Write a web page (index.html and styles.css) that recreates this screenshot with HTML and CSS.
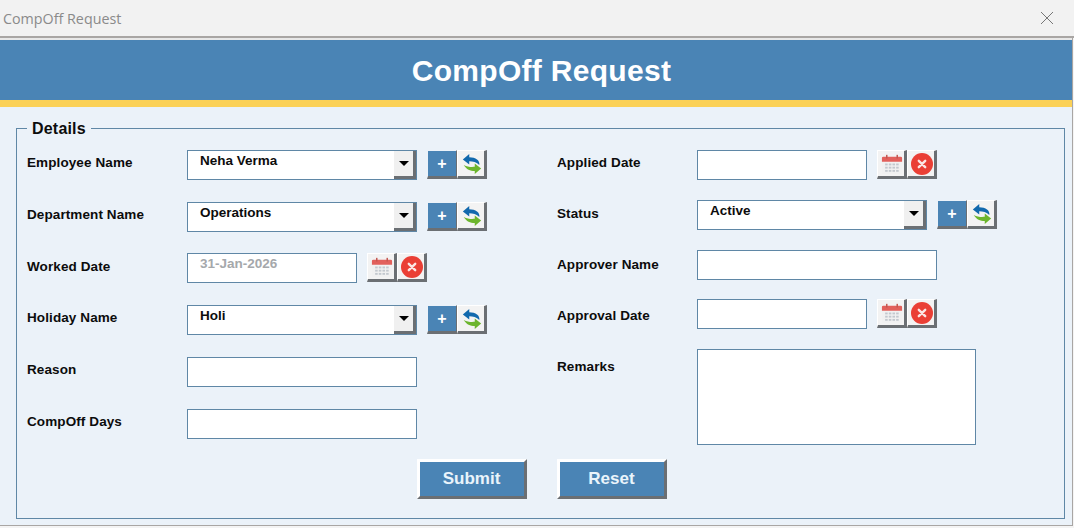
FILE: index.html
```html
<!DOCTYPE html>
<html lang="en">
<head>
    <meta charset="UTF-8">
    <title>CompOff Request</title>
    <link rel="stylesheet" href="styles.css">
</head>
<body>
    <svg class="icon-defs" width="0" height="0">
        <defs>
            <symbol id="i-cal" viewBox="0 0 24 24">
                <rect x="1" y="5" width="22" height="18" rx="1" fill="#f1f1f1"/>
                <path d="M1 5.500a1.500 1.500 0 0 1 1.500-1.500h19a1.500 1.500 0 0 1 1.500 1.500v4h-22z" fill="#e2605b"/>
                <rect x="5.500" y="2" width="1.600" height="4" fill="#c2564f"/>
                <rect x="16.900" y="2" width="1.600" height="4" fill="#c2564f"/>
                <g fill="#c3c8ce">
                    <rect x="4.500" y="11.500" width="2.800" height="2"/><rect x="8.500" y="11.500" width="2.800" height="2"/><rect x="12.500" y="11.500" width="2.800" height="2"/><rect x="16.500" y="11.500" width="2.800" height="2"/>
                    <rect x="4.500" y="15" width="2.800" height="2"/><rect x="8.500" y="15" width="2.800" height="2"/><rect x="12.500" y="15" width="2.800" height="2"/><rect x="16.500" y="15" width="2.800" height="2"/>
                    <rect x="4.500" y="18.500" width="2.800" height="2"/><rect x="8.500" y="18.500" width="2.800" height="2"/><rect x="12.500" y="18.500" width="2.800" height="2"/><rect x="16.500" y="18.500" width="2.800" height="2"/>
                </g>
            </symbol>
            <symbol id="i-clear" viewBox="0 0 24 24">
                <circle cx="12" cy="12" r="12" fill="#ea3f35"/>
                <path d="M8.500 8.500l7 7M15.500 8.500l-7 7" stroke="#fbe6e4" stroke-width="2.600" stroke-linecap="round"/>
            </symbol>
            <symbol id="i-refresh" viewBox="0 0 24 24">
                <path d="M9 1L2 7l7 5.500V9c4 0 8 1 11 4 1-5-4-8.500-11-8.500z" fill="#1269ad"/>
                <path d="M15 11.500l7 5.500-7 6v-3.500c-5 0-9-1.500-12-6.500 4 2 8 2.500 12 2z" fill="#6cb52d"/>
            </symbol>
        </defs>
    </svg>

    <div class="titlebar">
        <span class="titlebar-text">CompOff Request</span>
        <svg class="close-x" width="14" height="14" viewBox="0 0 14 14"><path d="M1 1l12 12M13 1L1 13" stroke="#777" stroke-width="1"/></svg>
    </div>

    <div class="window">
        <header class="banner"><h1>CompOff Request</h1></header>

        <fieldset class="details">
            <legend>Details</legend>

            <div class="columns">
                <div class="col col-left">
                    <div class="row">
                        <label>Employee Name</label>
                        <div class="combo"><span>Neha Verma</span><i class="drop"></i></div>
                        <button class="tool tool-add">+</button><button class="tool"><svg><use href="#i-refresh"/></svg></button>
                    </div>
                    <div class="row">
                        <label>Department Name</label>
                        <div class="combo"><span>Operations</span><i class="drop"></i></div>
                        <button class="tool tool-add">+</button><button class="tool"><svg><use href="#i-refresh"/></svg></button>
                    </div>
                    <div class="row row-tight">
                        <label class="drop-1">Worked Date</label>
                        <div class="box box-date box-muted">31-Jan-2026</div>
                        <button class="tool"><svg><use href="#i-cal"/></svg></button><button class="tool"><svg><use href="#i-clear"/></svg></button>
                    </div>
                    <div class="row">
                        <label>Holiday Name</label>
                        <div class="combo"><span>Holi</span><i class="drop"></i></div>
                        <button class="tool tool-add">+</button><button class="tool"><svg><use href="#i-refresh"/></svg></button>
                    </div>
                    <div class="row">
                        <label>Reason</label>
                        <div class="box box-wide"></div>
                    </div>
                    <div class="row">
                        <label>CompOff Days</label>
                        <div class="box box-wide"></div>
                    </div>
                </div>

                <div class="col col-right">
                    <div class="row">
                        <label>Applied Date</label>
                        <div class="box box-date"></div>
                        <button class="tool"><svg><use href="#i-cal"/></svg></button><button class="tool"><svg><use href="#i-clear"/></svg></button>
                    </div>
                    <div class="row">
                        <label class="drop-1">Status</label>
                        <div class="combo"><span>Active</span><i class="drop"></i></div>
                        <button class="tool tool-add">+</button><button class="tool"><svg><use href="#i-refresh"/></svg></button>
                    </div>
                    <div class="row">
                        <label class="drop-2">Approver Name</label>
                        <div class="box box-approver"></div>
                    </div>
                    <div class="row row-tight">
                        <label class="drop-4">Approval Date</label>
                        <div class="box box-date"></div>
                        <button class="tool"><svg><use href="#i-cal"/></svg></button><button class="tool"><svg><use href="#i-clear"/></svg></button>
                    </div>
                    <div class="row row-top">
                        <label class="drop-5">Remarks</label>
                        <div class="box box-remarks"></div>
                    </div>
                </div>
            </div>

            <div class="actions">
                <button class="action">Submit</button>
                <button class="action">Reset</button>
            </div>
        </fieldset>
    </div>
</body>
</html>
```

FILE: styles.css
```css
:root {
    --steel: #4a84b5;
    --yellow: #fbd157;
    --panel: #ebf2f9;
    --line: #5f87a6;
    --shade: #6b6f73;
}

* {
    box-sizing: border-box;
}

html, body {
    height: 100%;
}

body {
    margin: 0;
    background-color: #f4f4f4;
    color: #0c0c0c;
    font-family: "Liberation Sans", Arial, sans-serif;
    overflow: hidden;
}

.icon-defs {
    position: absolute;
}

.titlebar {
    height: 38px;
    padding: 0 20px 0 3px;
    display: flex;
    align-items: center;
    justify-content: space-between;
    background-color: #f2f2f2;
    border-bottom: 2px solid #a9a6a4;
}

.titlebar-text {
    font-family: "Open Sans", sans-serif;
    font-size: 14.300px;
    color: #8a8a8a;
}

.window {
    margin-right: 2px;
    height: 488px;
    border-top: 2px solid #e8e8e8;
    border-bottom: 1px solid #a9a6a4;
    background-color: var(--panel);
    box-shadow: 1px 0 0 #a9a6a4;
}

.banner {
    height: 67px;
    padding: 1px 0 0 11px;
    display: flex;
    align-items: center;
    justify-content: center;
    background-color: var(--steel);
    border-bottom: 7px solid var(--yellow);
}

.banner h1 {
    margin: 0;
    font-size: 30px;
    letter-spacing: 0.3px;
    color: #fff;
}

.details {
    margin: 11px 7px 0 16px;
    padding: 12px 0 0 10px;
    height: 401px;
    border: 1px solid var(--line);
}

.details legend {
    padding: 2px 5px 0;
    font-size: 16px;
    line-height: 18px;
    font-weight: bold;
    letter-spacing: 0.2px;
}

.columns {
    display: flex;
}

.col {
    display: flex;
    flex-direction: column;
}

.col-left {
    width: 530px;
    gap: 22px;
}

.col-right {
    gap: 20px;
}

.col-right label {
    width: 140px;
}

.row {
    display: flex;
    align-items: flex-start;
    height: 30px;
}

.row-tight {
    margin-top: -1px;
}

.row label {
    padding-top: 5px;
    font-size: 13.500px;
    font-weight: bold;
    letter-spacing: 0.1px;
    line-height: 16px;
}

.col-left label {
    width: 160px;
}

.row .drop-1 {
    padding-top: 6px;
}

.row .drop-2 {
    padding-top: 7px;
}

.row .drop-4 {
    padding-top: 9px;
}

.row .drop-5 {
    padding-top: 10px;
}

.row-top {
    height: 96px;
}

.box,
.combo {
    height: 30px;
    background-color: #fff;
    border: 1px solid var(--line);
    font-size: 13.500px;
    font-weight: bold;
}

.combo {
    width: 230px;
    margin-right: 10px;
    padding: 2px 0 0 12px;
    display: flex;
    justify-content: space-between;
    line-height: 16px;
}

.drop {
    width: 22px;
    height: 28px;
    margin-top: -2px;
    display: flex;
    align-items: center;
    justify-content: center;
    background-color: #f0f0f0;
    border-right: 3px solid var(--shade);
    border-bottom: 3px solid var(--shade);
}

.drop::after {
    content: "";
    border-top: 5px solid #000;
    border-left: 5px solid transparent;
    border-right: 5px solid transparent;
}

.box-date {
    width: 170px;
    margin-right: 10px;
}

.box-muted {
    padding: 2px 0 0 12px;
    line-height: 16px;
    color: #a5a8ab;
}

.box-wide {
    width: 230px;
}

.box-approver {
    width: 240px;
}

.box-remarks {
    width: 279px;
    height: 96px;
}

.tool {
    width: 30px;
    height: 29px;
    padding: 0;
    display: flex;
    align-items: center;
    justify-content: center;
    background-color: #f3f3f3;
    border-style: solid;
    border-width: 1px 3px 3px 1px;
    border-color: #fff var(--shade) var(--shade) #fff;
}

.tool svg {
    width: 22px;
    height: 22px;
    margin-left: 1px;
}

.tool-add {
    background-color: var(--steel);
    color: #fff;
    font-family: "Liberation Sans", sans-serif;
    font-size: 16px;
    font-weight: bold;
    border-top-color: var(--panel);
    border-left-color: var(--panel);
    border-right-width: 1px;
}

.actions {
    margin-top: 14px;
    display: flex;
    justify-content: center;
    gap: 30px;
    padding-right: 10px;
    padding-left: 2px;
}

.action {
    width: 110px;
    height: 40px;
    padding: 0;
    background-color: var(--steel);
    color: #eaf4fb;
    font-family: "Liberation Sans", sans-serif;
    font-size: 17px;
    font-weight: bold;
    border-style: solid;
    border-width: 3px;
    border-color: #fff var(--shade) var(--shade) #fff;
}
```
